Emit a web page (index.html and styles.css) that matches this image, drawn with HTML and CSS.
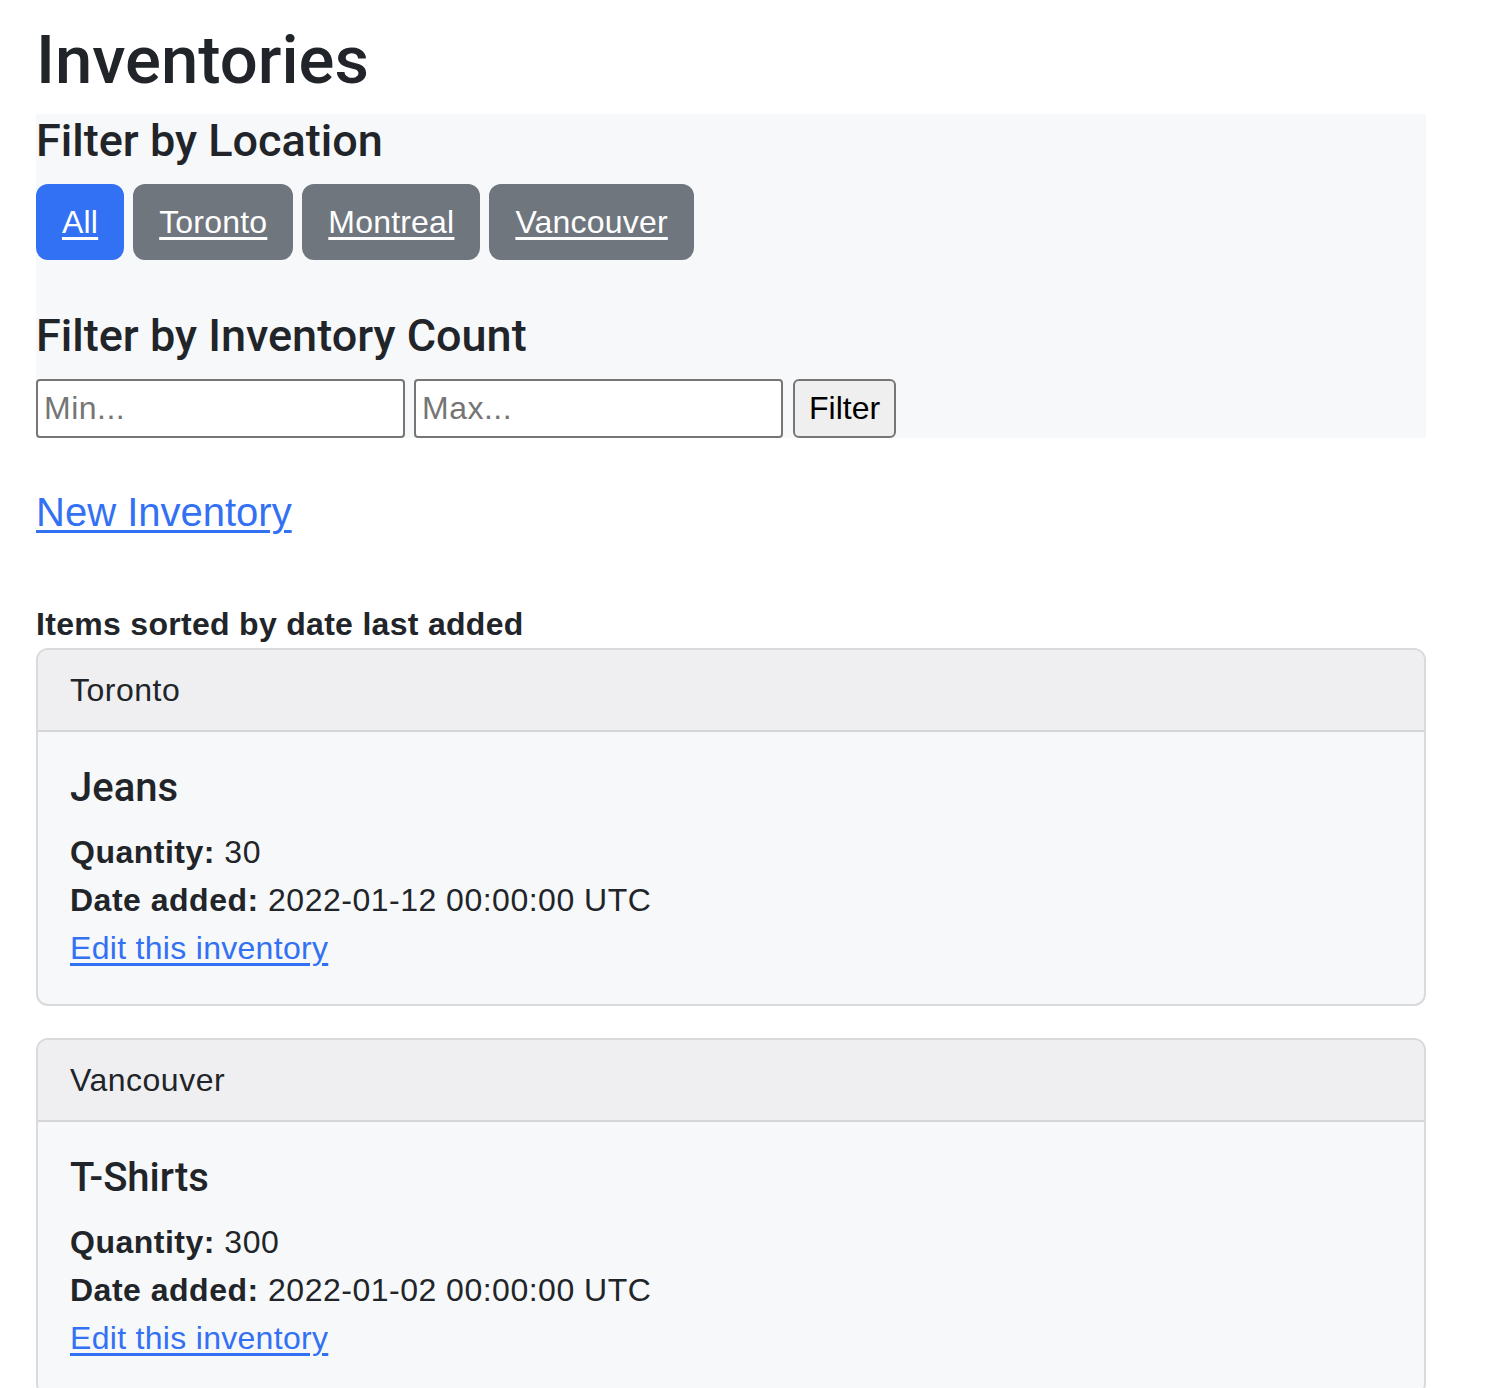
FILE: index.html
```html
<!DOCTYPE html>
<html lang="en">
<head>
<meta charset="utf-8">
<title>Inventories</title>
<link rel="stylesheet" href="styles.css">
</head>
<body>
<main class="page">
  <h1 class="title">Inventories</h1>
  <section class="filters">
    <h4 class="filter-heading">Filter by Location</h4>
    <div class="btn-row">
      <a class="btn btn-primary" href="#">All</a>
      <a class="btn btn-secondary" href="#">Toronto</a>
      <a class="btn btn-secondary" href="#">Montreal</a>
      <a class="btn btn-secondary" href="#">Vancouver</a>
    </div>
    <h4 class="filter-heading">Filter by Inventory Count</h4>
    <form class="count-form">
      <input class="count-input" type="text" placeholder="Min...">
      <input class="count-input" type="text" placeholder="Max...">
      <button class="filter-btn" type="button">Filter</button>
    </form>
  </section>
  <p class="new-link-row"><a class="new-link" href="#">New Inventory</a></p>
  <p class="sorted-label">Items sorted by date last added</p>
  <div class="card">
    <div class="card-header">Toronto</div>
    <div class="card-body">
      <h5 class="card-title">Jeans</h5>
      <div class="card-line"><strong>Quantity:</strong> 30</div>
      <div class="card-line"><strong>Date added:</strong> 2022-01-12 00:00:00 UTC</div>
      <div class="card-line"><a class="edit-link" href="#">Edit this inventory</a></div>
    </div>
  </div>
  <div class="card">
    <div class="card-header">Vancouver</div>
    <div class="card-body">
      <h5 class="card-title">T-Shirts</h5>
      <div class="card-line"><strong>Quantity:</strong> 300</div>
      <div class="card-line"><strong>Date added:</strong> 2022-01-02 00:00:00 UTC</div>
      <div class="card-line"><a class="edit-link" href="#">Edit this inventory</a></div>
    </div>
  </div>
</main>
</body>
</html>
```
FILE: styles.css
```css
* { box-sizing: border-box; }
html, body { margin: 0; padding: 0; background: #ffffff; }
body {
  font-family: "Liberation Sans", Arial, sans-serif;
  font-size: 32px;
  line-height: 48px;
  letter-spacing: 0.5px;
  color: #212529;
}
.page {
  padding: 20px 0 0 36px;
  width: 1426px;
}
.title, .filter-heading, .card-title {
  font-family: Roboto, "Liberation Sans", Arial, sans-serif;
  font-weight: 500;
  letter-spacing: 0;
}
.title {
  margin: 0 0 14px 0;
  font-size: 67px;
  line-height: 80px;
}
.filters {
  background: #f7f8fa;
  margin-bottom: 50px;
}
.filter-heading {
  margin: 0 0 16px 0;
  font-size: 45px;
  line-height: 54px;
}
.btn-row {
  display: flex;
  gap: 9px;
  margin-bottom: 49px;
}
.btn {
  display: inline-block;
  padding: 12px 24px;
  border: 2px solid transparent;
  border-radius: 12px;
  color: #ffffff;
  font-size: 32px;
  line-height: 48px;
  letter-spacing: 0.2px;
  text-decoration: underline;
  text-underline-offset: 4px;
  text-decoration-thickness: 3px;
}
.btn-primary { background: #3371f4; border-color: #3371f4; }
.btn-secondary { background: #6f767e; border-color: #6f767e; }
.count-form {
  display: flex;
  gap: 9px;
  align-items: stretch;
}
.count-input {
  width: 369px;
  height: 59px;
  margin: 0;
  padding: 0 6px;
  border: 2px solid #767676;
  border-radius: 4px;
  background: #ffffff;
  font-family: inherit;
  font-size: 32px;
  letter-spacing: 0.5px;
  color: #212529;
}
.count-input::placeholder { color: #757575; }
.filter-btn {
  height: 59px;
  margin: 0 0 0 1px;
  padding: 0 14px;
  border: 2px solid #767676;
  border-radius: 6px;
  background: #efefef;
  font-family: inherit;
  font-size: 32px;
  letter-spacing: 0;
  color: #000000;
}
.new-link-row {
  margin: 0 0 64px 0;
  font-size: 40px;
  line-height: 48px;
  letter-spacing: 0;
}
.new-link, .edit-link {
  color: #3371f4;
  text-decoration: underline;
  text-underline-offset: 4px;
  text-decoration-thickness: 3px;
}
.edit-link { letter-spacing: 0.3px; }
.sorted-label {
  margin: 0;
  font-weight: 700;
  letter-spacing: 0.3px;
}
.card {
  border: 2px solid #dadadc;
  border-radius: 12px;
  background: #f7f8fa;
  margin-bottom: 32px;
  overflow: hidden;
}
.card-header {
  padding: 16px 32px;
  background: #efeff1;
  border-bottom: 2px solid #d6d6d8;
}
.card-body {
  padding: 32px;
}
.card-title {
  margin: 0 0 16px 0;
  font-size: 40px;
  line-height: 48px;
}
.card-line strong { font-weight: 700; }
```
